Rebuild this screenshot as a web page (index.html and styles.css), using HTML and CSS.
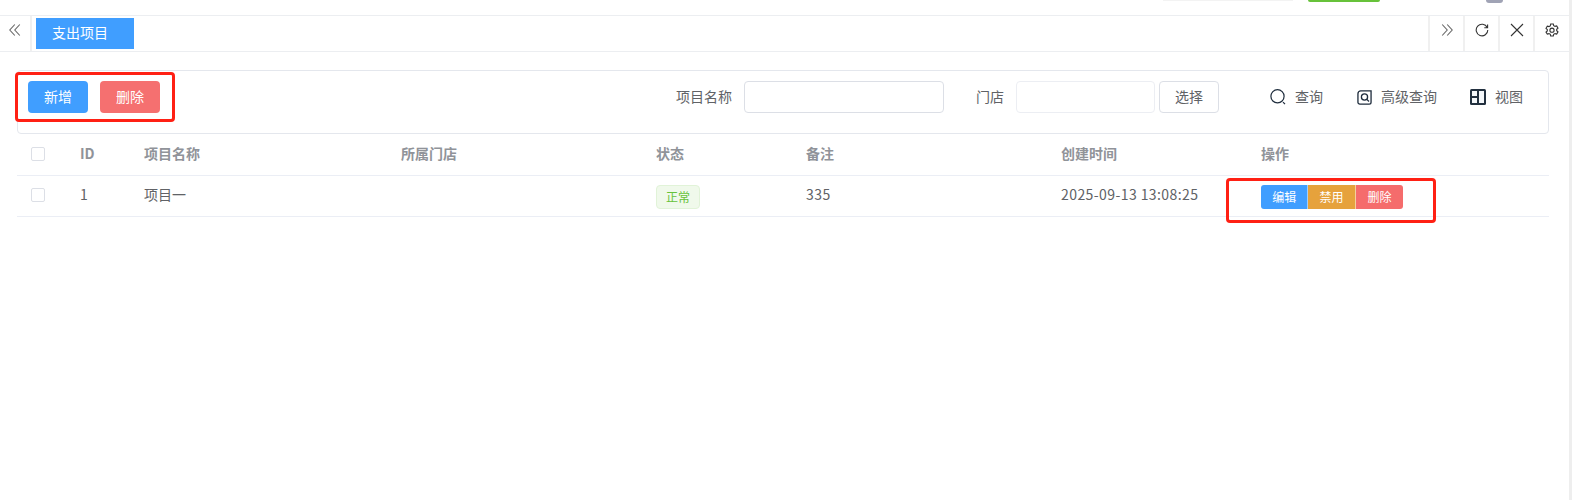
FILE: index.html
```html
<!DOCTYPE html>
<html lang="zh-CN">
<head>
<meta charset="utf-8">
<title>支出项目</title>
<link rel="stylesheet" href="styles.css">
</head>
<body>
<div class="page">
  <div class="top-strip">
    <span class="strip-input"></span>
    <span class="strip-green"></span>
    <span class="strip-avatar"></span>
  </div>
  <div class="tabbar">
    <div class="tab-cell tab-collapse">
      <svg class="ico" viewBox="0 0 12 12"><path d="M5.800.5.800 6l5 5.500M10.800.5l-5 5.500 5 5.500" /></svg>
    </div>
    <div class="tab-active">支出项目</div>
    <div class="tab-spacer"></div>
    <div class="tab-cell">
      <svg class="ico" viewBox="0 0 12 12"><path d="M1.200.5l5 5.500-5 5.500M6.200.5l5 5.500-5 5.500" /></svg>
    </div>
    <div class="tab-cell">
      <svg class="ico ico-dark" viewBox="0 0 14 14"><path d="M12.200 4.500A5.800 5.800 0 1 0 12.800 7M12.600 1.500v3.300H9.300" /></svg>
    </div>
    <div class="tab-cell">
      <svg class="ico ico-dark" viewBox="0 0 14 14"><path d="M1 1l12 12M13 1 1 13" /></svg>
    </div>
    <div class="tab-cell tab-last">
      <svg class="ico ico-dark" viewBox="0 0 14 14"><path d="M5.700 1h2.600l.4 1.700 1.300.7 1.700-.5 1.300 2.200-1.300 1.200v1.400l1.300 1.200-1.300 2.200-1.700-.5-1.300.7-.4 1.700H5.700l-.4-1.700-1.300-.7-1.700.5L1 9.100l1.300-1.200V6.500L1 5.300l1.300-2.200 1.700.5 1.300-.7z"/><circle cx="7" cy="7.200" r="2.100"/></svg>
    </div>
  </div>

  <div class="content">
    <div class="toolbar">
      <div class="tool-left">
        <button class="btn btn-blue">新增</button>
        <button class="btn btn-red">删除</button>
      </div>
      <div class="filters">
        <label class="f-label">项目名称</label>
        <input class="f-input f-name" type="text">
        <label class="f-label f-label-shop">门店</label>
        <input class="f-input f-shop" type="text">
        <button class="btn btn-plain">选择</button>
      </div>
      <div class="actions">
        <span class="action action-first">
          <svg class="a-ico" viewBox="0 0 16 16"><circle cx="7.500" cy="7.300" r="6.600"/><path d="M13 13.200l2 2"/></svg>查询
        </span>
        <span class="action">
          <svg class="a-ico a-adv" viewBox="0 0 16 16"><path d="M4 1h11v12a2 2 0 0 1-2 2H3a2 2 0 0 1-2-2V4a3 3 0 0 1 3-3z"/><circle cx="8" cy="7.500" r="3.300"/><path d="M10.500 10l2.300 2.300"/></svg>高级查询
        </span>
        <span class="action">
          <svg class="a-ico a-view" viewBox="0 0 16 16"><rect class="v-frame" width="16" height="16" rx="1.500"/><rect class="v-pane" x="2" y="2" width="5" height="5"/><rect class="v-pane" x="2" y="9" width="5" height="5"/><rect class="v-pane" x="9" y="2" width="5" height="12"/></svg>视图
        </span>
      </div>
    </div>

    <div class="table">
      <div class="row row-head">
        <div class="cell cell-check"><span class="check"></span></div>
        <div class="cell cell-text">ID</div>
        <div class="cell cell-text">项目名称</div>
        <div class="cell cell-text">所属门店</div>
        <div class="cell cell-text">状态</div>
        <div class="cell cell-text">备注</div>
        <div class="cell cell-text">创建时间</div>
        <div class="cell cell-text">操作</div>
      </div>
      <div class="row">
        <div class="cell cell-check"><span class="check"></span></div>
        <div class="cell cell-text">1</div>
        <div class="cell cell-text">项目一</div>
        <div class="cell"></div>
        <div class="cell cell-low"><span class="tag">正常</span></div>
        <div class="cell cell-text num">335</div>
        <div class="cell cell-text num">2025-09-13 13:08:25</div>
        <div class="cell cell-low">
          <div class="btn-group">
            <button class="mini mini-blue">编辑</button>
            <button class="mini mini-orange">禁用</button>
            <button class="mini mini-red">删除</button>
          </div>
        </div>
      </div>
    </div>
  </div>

  <div class="mark mark-left"></div>
  <div class="mark mark-right"></div>
</div>
</body>
</html>
```

FILE: styles.css
```css
* { box-sizing: border-box; }
html, body { margin: 0; height: 100%; background: #fff; overflow: hidden; }
body {
  font-family: "Noto Sans CJK SC", "Liberation Sans", sans-serif;
  font-size: 14px;
  color: #606266;
}
.page {
  position: relative;
  width: 1572px;
  height: 500px;
  border-right: 3px solid #eeeeee;
}
.top-strip {
  height: 15px;
  display: flex;
  align-items: flex-start;
}
.strip-input {
  margin-left: 1163px;
  width: 130px;
  height: 1px;
  background: #f3f3f3;
}
.strip-green {
  margin-left: 15px;
  width: 72px;
  height: 2px;
  background: #67c23a;
  border-radius: 0 0 3px 3px;
}
.strip-avatar {
  margin-left: 106px;
  width: 17px;
  height: 3px;
  background: #a0a3b5;
  border-radius: 0 0 9px 9px;
}
.tabbar {
  height: 37px;
  display: flex;
  align-items: stretch;
  border-top: 1px solid #eceef1;
  border-bottom: 1px solid #eceef1;
}
.tab-cell {
  width: 35px;
  display: flex;
  justify-content: center;
  padding-top: 7px;
  border-left: 2px solid #f0f0f0;
}
.tab-last { width: 36px; }
.tab-collapse {
  width: 32px;
  border-left: 0;
  border-right: 2px solid #f0f0f0;
}
.tab-active {
  margin: 2px 0 2px 4px;
  width: 98px;
  display: flex;
  align-items: center;
  padding: 0 0 3px 16px;
  background: #409eff;
  color: #fff;
  line-height: 1;
}
.tab-spacer { flex: 1; }
.ico {
  width: 12px;
  height: 12px;
  margin-top: 1px;
  fill: none;
  stroke: #666;
  stroke-width: 1.100;
}
.ico-dark { stroke: #333; width: 14px; height: 14px; margin-top: 0; }

.content { padding: 18px 20px 0 17px; }
.toolbar {
  height: 64px;
  border: 1px solid #e4e7ed;
  border-radius: 4px;
  display: flex;
  align-items: flex-start;
  padding: 10px 25px 0 10px;
}
.tool-left { display: flex; gap: 12px; margin-right: auto; }
.btn {
  height: 32px;
  width: 60px;
  padding: 0 0 2px;
  border: 1px solid transparent;
  border-radius: 4px;
  font: inherit;
  line-height: 1;
  color: #fff;
}
.btn-blue { background: #409eff; }
.btn-red { background: #f56c6c; opacity: .97; }
.btn-plain {
  background: #fff;
  color: #606266;
  border-color: #dcdfe6;
  margin-left: 4px;
}
.filters { display: flex; align-items: center; height: 32px; }
.f-label { margin-right: 12px; line-height: 1; white-space: nowrap; padding-bottom: 2px; }
.f-label-shop { margin-left: 32px; margin-right: 12px; }
.f-input {
  height: 32px;
  border: 1px solid #dcdfe6;
  border-radius: 4px;
  background: #fff;
  outline: 0;
  padding: 0;
  flex: none;
}
.f-name { width: 200px; }
.f-shop { width: 139px; border-color: #eceef3; }
.actions { display: flex; align-items: center; height: 32px; gap: 33px; margin-left: 51px; }
.action { display: flex; align-items: center; line-height: 1; white-space: nowrap; padding-bottom: 2px; }
.action-first { margin-right: 1px; }
.a-ico {
  width: 16px;
  height: 16px;
  margin-right: 9px;
  margin-top: 2px;
  fill: none;
  stroke: #1f2d3d;
  stroke-width: 1.200;
  flex: none;
}
.a-adv { width: 15px; height: 15px; stroke-width: 1.400; }
.a-view { stroke: none; }
.v-frame { fill: #22303f; }
.v-pane { fill: #f4f7fa; }

.table { margin-top: 1px; }
.row {
  display: grid;
  grid-template-columns: 49px 64px 257px 255px 150px 255px 200px 302px;
  height: 41px;
  border-bottom: 1px solid #ebeef5;
  align-items: center;
}
.row-head { font-weight: 700; color: #909399; }
.cell { padding-left: 14px; display: flex; align-items: center; line-height: 1; }
.cell-text { padding-bottom: 5px; }
.cell-check { padding-bottom: 2px; }
.cell-low { padding-top: 2px; }
.num { letter-spacing: .42px; }
.check {
  display: block;
  width: 14px;
  height: 14px;
  border: 1px solid #dcdfe6;
  border-radius: 2px;
  background: #fff;
}
.tag {
  width: 44px;
  height: 24px;
  display: flex;
  align-items: center;
  justify-content: center;
  font-size: 12px;
  color: #67c23a;
  background: #f0f9eb;
  border: 1px solid #e1f3d8;
  border-radius: 4px;
}
.btn-group { display: flex; }
.mini {
  width: 47.400px;
  height: 24px;
  padding: 0;
  border: 0;
  font: inherit;
  font-size: 12px;
  line-height: 1;
  color: #fff;
}
.mini-blue { background: #409eff; border-radius: 3px 0 0 3px; border-right: 1px solid #a0cfff; }
.mini-orange { background: #e6a23c; border-right: 1px solid #f3d19e; }
.mini-red { background: #f56c6c; border-radius: 0 3px 3px 0; }

.mark {
  position: absolute;
  border: 3px solid #ff2014;
  border-radius: 4px;
  pointer-events: none;
}
.mark-left { left: 15px; top: 72px; width: 160px; height: 50px; }
.mark-right { left: 1226px; top: 178px; width: 210px; height: 45px; }
```
